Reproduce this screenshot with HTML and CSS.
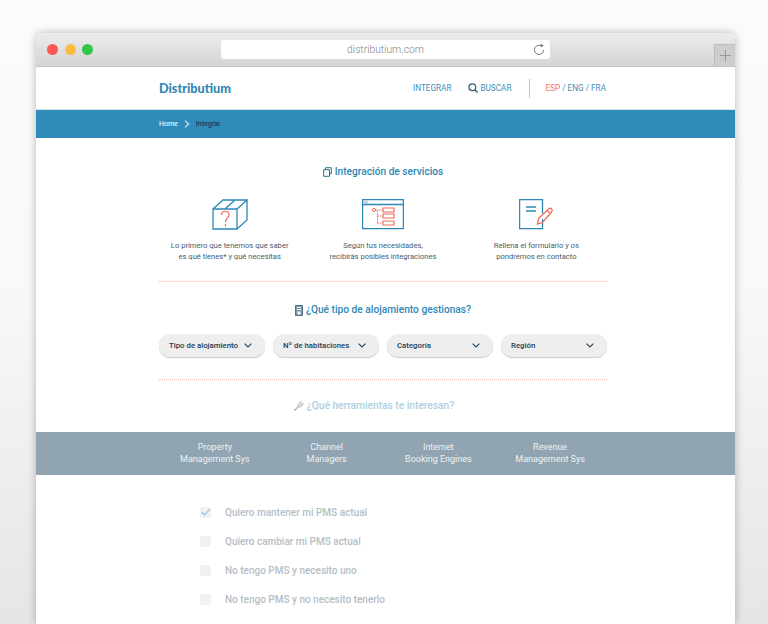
FILE: index.html
```html
<!DOCTYPE html>
<html>
<head>
    <meta charset="utf-8">
    <link rel="stylesheet" href="styles.css">
</head>
<body>
    <div class="window">
        <div class="chrome">
            <div class="dots">
                <span class="dot dot-red"></span>
                <span class="dot dot-yellow"></span>
                <span class="dot dot-green"></span>
            </div>
            <div class="address">
                <span>distributium.com</span>
                <svg class="reload" width="12" height="13" viewBox="0 0 12 13"><path d="M8.8 3.2A4.6 4.6 0 1 0 10.6 7" fill="none" stroke="#777" stroke-width="1"/><path d="M7.6 .8l3 1.6-2.600 2z" fill="#777"/></svg>
            </div>
            <div class="new-tab">
                <svg width="11" height="11" viewBox="0 0 11 11"><path d="M5.5 0v11M0 5.5h11" stroke="#999" stroke-width="1"/></svg>
            </div>
        </div>

        <div class="header">
            <div class="logo">Distributium</div>
            <div class="nav">
                <a class="nav-link">INTEGRAR</a>
                <a class="nav-link search-link">
                    <svg width="10" height="10" viewBox="0 0 10 10"><circle cx="4.3" cy="4.3" r="3.4" fill="none" stroke="#2d5a78" stroke-width="1.2"/><path d="M6.8 6.8L9.6 9.6" stroke="#2d5a78" stroke-width="1.3"/></svg>
                    BUSCAR
                </a>
                <span class="nav-divider"></span>
                <div class="langs"><span class="lang-active">ESP</span> / ENG / FRA</div>
            </div>
        </div>

        <div class="crumbs">
            <div class="crumbs-inner">
                <span class="crumb-home">Home</span>
                <svg width="6" height="8" viewBox="0 0 6 8"><path d="M1 .6L4.600 4 1 7.400" fill="none" stroke="#d9ebf4" stroke-width="1.100"/></svg>
                <span class="crumb-current">Integrar</span>
            </div>
        </div>

        <div class="content">
            <h3 class="section-title title-first">
                <svg width="9" height="10" viewBox="0 0 9 10"><path d="M2.500 2.500V.7h5.800v6H6.500M.7 2.700h5.800v6.600H.7z" fill="none" stroke="#2d6d91" stroke-width="1"/></svg>
                Integración de servicios
            </h3>

            <div class="steps">
                <div class="step">
                    <svg width="36" height="31" viewBox="0 0 36 31">
                        <path d="M1 10h24v20H1zM1 10L11 1h24L25 10M25 30l10-9V1M13 10L23 1" fill="none" stroke="#2f87b5" stroke-width="1.300"/>
                        <path d="M9.500 16c0-5 7.500-5 7.500 0 0 3-3.500 3-3.500 7M13.500 25v2.500" fill="none" stroke="#ee6b5b" stroke-width="1.200"/>
                    </svg>
                    <p>Lo primero que tenemos que saber<br>es qué tienes* y qué necesitas</p>
                </div>
                <div class="step">
                    <svg width="42" height="31" viewBox="0 0 42 31">
                        <path d="M.6.6h40.800v29H.6zM.6 5.500h40.800" fill="none" stroke="#2f87b5" stroke-width="1.300"/>
                        <rect x="1" y="1" width="5" height="4" fill="#c9d3da"/>
                        <circle cx="12" cy="11" r="1.600" fill="none" stroke="#ee6b5b"/>
                        <path d="M14 11h6M15.500 12v12M15.500 17h4M15.500 24h4" fill="none" stroke="#ee6b5b" stroke-dasharray="1.500 1"/>
                        <path d="M21 9h11v4H21zM21 15h11v4H21zM21 22h11v4H21z" fill="none" stroke="#ee6b5b" stroke-width="1.200"/>
                    </svg>
                    <p>Según tus necesidades,<br>recibirás posibles integraciones</p>
                </div>
                <div class="step">
                    <svg width="34" height="31" viewBox="0 0 34 31">
                        <path d="M23.500 20v9.600H.6V.6h22.900v14" fill="none" stroke="#2f87b5" stroke-width="1.300"/>
                        <path d="M7 8h10M7 12h10" stroke="#2f87b5" stroke-width="1.300"/>
                        <path d="M18.500 25l1-5.500L29.500 10c1-1 2.500-1 3.200 0 .7 1 .6 2-.2 3L23.500 23.500z M28 11.500l3.500 3" fill="none" stroke="#ee6b5b" stroke-width="1.300"/>
                    </svg>
                    <p>Rellena el formulario y os<br>pondremos en contacto</p>
                </div>
            </div>

            <div class="dotted"></div>

            <h3 class="section-title title-lodging">
                <svg width="8" height="11" viewBox="0 0 8 11"><path d="M.5.5h7v10h-7z" fill="#7c97a8" stroke="#4f7186"/><path d="M2 2.500h4M2 4.500h4" stroke="#fff"/><rect x="2.500" y="6.500" width="3" height="3" fill="#fff"/></svg>
                ¿Qué tipo de alojamiento gestionas?
            </h3>

            <div class="filters">
                <div class="filter"><span>Tipo de alojamiento</span><svg width="8" height="5" viewBox="0 0 8 5"><path d="M.6.6L4 4l3.400-3.400" fill="none" stroke="#24445c" stroke-width="1.100"/></svg></div>
                <div class="filter"><span>Nº de habitaciones</span><svg width="8" height="5" viewBox="0 0 8 5"><path d="M.6.6L4 4l3.400-3.400" fill="none" stroke="#24445c" stroke-width="1.100"/></svg></div>
                <div class="filter"><span>Categoría</span><svg width="8" height="5" viewBox="0 0 8 5"><path d="M.6.6L4 4l3.400-3.400" fill="none" stroke="#24445c" stroke-width="1.100"/></svg></div>
                <div class="filter"><span>Región</span><svg width="8" height="5" viewBox="0 0 8 5"><path d="M.6.6L4 4l3.400-3.400" fill="none" stroke="#24445c" stroke-width="1.100"/></svg></div>
            </div>

            <div class="dotted dotted-second"></div>

            <h3 class="section-title title-tools">
                <svg width="10" height="10" viewBox="0 0 10 10"><path d="M1 9l3.700-3.700M1.800 9.600L.4 8.200" fill="none" stroke="#a9b5bd" stroke-width="1.300"/><path d="M4.300 5.700L3.900 3.600 6.700.7l1.100.2-1.600 1.700 1.200 1.200L9 2.200l.3 1.100-2.900 2.800z" fill="#dfe4e8" stroke="#a9b5bd" stroke-width=".8"/></svg>
                ¿Qué herramientas te interesan?
            </h3>
        </div>

        <div class="tabs">
            <div class="tabs-inner">
                <div class="tab">Property<br>Management Sys</div>
                <div class="tab">Channel<br>Managers</div>
                <div class="tab">Internet<br>Booking Engines</div>
                <div class="tab">Revenue<br>Management Sys</div>
            </div>
        </div>

        <ul class="options">
            <li><span class="check"><svg width="10" height="8" viewBox="0 0 10 8"><path d="M.8 4l2.800 3L9.200.6" fill="none" stroke="#8fbfdc" stroke-width="1.100"/></svg></span>Quiero mantener mi PMS actual</li>
            <li><span class="check"></span>Quiero cambiar mi PMS actual</li>
            <li><span class="check"></span>No tengo PMS y necesito uno</li>
            <li><span class="check"></span>No tengo PMS y no necesito tenerlo</li>
        </ul>
    </div>
</body>
</html>
```

FILE: styles.css
```css
html, body {
    margin: 0;
    height: 624px;
    overflow: hidden;
}

body {
    padding: 33px 33px 0 36px;
    box-sizing: border-box;
    background: linear-gradient(#fbfbfb 0, #f8f8f8 300px, #e5e5e5 624px);
    font-family: Roboto, sans-serif;
}

.window {
    background: #fff;
    border-radius: 6px 6px 0 0;
    box-shadow: 0 0 8px rgba(0, 0, 0, 0.28);
    height: 591px;
    overflow: hidden;
}

/* browser bar */
.chrome {
    position: relative;
    height: 34px;
    box-sizing: border-box;
    background: linear-gradient(#ececec, #d4d4d4);
    border-bottom: 1px solid #c4c4c4;
    display: flex;
    align-items: center;
}

.dots {
    display: flex;
    gap: 6.5px;
    margin-left: 11px;
    margin-top: -1px;
}

.dot {
    width: 11px;
    height: 11px;
    border-radius: 50%;
}

.dot-red { background: #fc5753; }
.dot-yellow { background: #fdbc40; }
.dot-green { background: #33c748; }

.address {
    position: absolute;
    left: 185px;
    top: 7px;
    width: 329px;
    height: 19px;
    background: #fff;
    border-radius: 3px;
    display: flex;
    align-items: center;
    justify-content: center;
    color: #858585;
    font-weight: 300;
    font-size: 10.3px;
}

.reload {
    position: absolute;
    right: 5px;
    top: 3px;
}

.new-tab {
    position: absolute;
    right: 0;
    top: 11px;
    width: 21px;
    height: 22px;
    box-sizing: border-box;
    background: #cdcdcd;
    border: 1px solid #bdbdbd;
    border-right: none;
    border-bottom: none;
    display: flex;
    align-items: center;
    justify-content: center;
}

/* site header */
.header {
    height: 42px;
    padding: 0 129px 0 123px;
    display: flex;
    align-items: center;
    justify-content: space-between;
    border-bottom: 1px solid #d5e5ee;
}

.logo {
    font-family: "Lato", sans-serif;
    font-weight: 900;
    font-size: 12.7px;
    color: #2f87b5;
}

.nav {
    display: flex;
    align-items: center;
    font-size: 8.2px;
    color: #3f8fba;
}

.search-link {
    display: flex;
    align-items: center;
    gap: 2px;
    margin-left: 17px;
}

.nav-divider {
    width: 1px;
    height: 19px;
    background: #a9cfe2;
    margin: 0 15px 0 18px;
}

.lang-active {
    color: #f2706a;
}

/* breadcrumb */
.crumbs {
    height: 28px;
    background: #318bba;
    display: flex;
    align-items: center;
    font-size: 7px;
    font-weight: 500;
}

.crumbs-inner {
    margin-left: 123px;
    display: flex;
    align-items: center;
    gap: 6px;
}

.crumb-home { color: #e1eef5; }
.crumb-current { color: #123e5c; }

/* main column */
.content {
    padding: 0 128px 0 123px;
}

.section-title {
    margin: 0;
    display: flex;
    align-items: center;
    justify-content: center;
    gap: 3px;
    font-size: 10.2px;
    line-height: 14px;
    font-weight: 500;
    color: #2f87b5;
}

.title-first { padding-top: 27px; }
.title-lodging { padding-top: 21px; }
.title-tools { padding: 19px 18px 0 0; color: #aecfe2; }

.steps {
    display: flex;
    margin: 20px -6px 0;
}

.step {
    flex: 1;
    text-align: center;
    height: 63px;
}

.step svg {
    display: block;
    margin: 0 auto;
}

.step p {
    margin: 10px 0 0;
    font-size: 7.6px;
    line-height: 11px;
    color: #465d6d;
}

.dotted {
    margin-top: 19px;
    border-top: 1px dotted #f3b3ae;
}

.dotted-second {
    margin-top: 22px;
}

.filters {
    display: flex;
    justify-content: space-between;
    margin-top: 17px;
}

.filter {
    width: 106px;
    height: 23px;
    box-sizing: border-box;
    padding: 0 13px 0 10px;
    border-radius: 12px;
    background: #eeeeee;
    box-shadow: 0 1px 1px rgba(0, 0, 0, 0.2);
    display: flex;
    align-items: center;
    justify-content: space-between;
    font-size: 7.8px;
    font-weight: 500;
    color: #1f3b52;
}

/* tool tabs */
.tabs {
    margin-top: 19px;
    height: 43px;
    box-sizing: border-box;
    padding-bottom: 2px;
    background: #90a4b1;
    display: flex;
    align-items: center;
}

.tabs-inner {
    margin-left: 123px;
    width: 447px;
    display: flex;
    justify-content: space-between;
}

.tab {
    width: 112px;
    text-align: center;
    font-size: 9px;
    line-height: 12px;
    color: #eef2f4;
}

/* options */
.options {
    list-style: none;
    margin: 30px 0 0;
    padding: 0 0 0 164px;
    display: flex;
    flex-direction: column;
    gap: 15px;
}

.options li {
    display: flex;
    align-items: center;
    gap: 14px;
    height: 14px;
    font-size: 10px;
    font-weight: 500;
    color: #b4bec6;
}

.check {
    width: 11px;
    height: 11px;
    border-radius: 2px;
    background: #f0f1f2;
    display: flex;
    align-items: center;
    justify-content: center;
}
```
